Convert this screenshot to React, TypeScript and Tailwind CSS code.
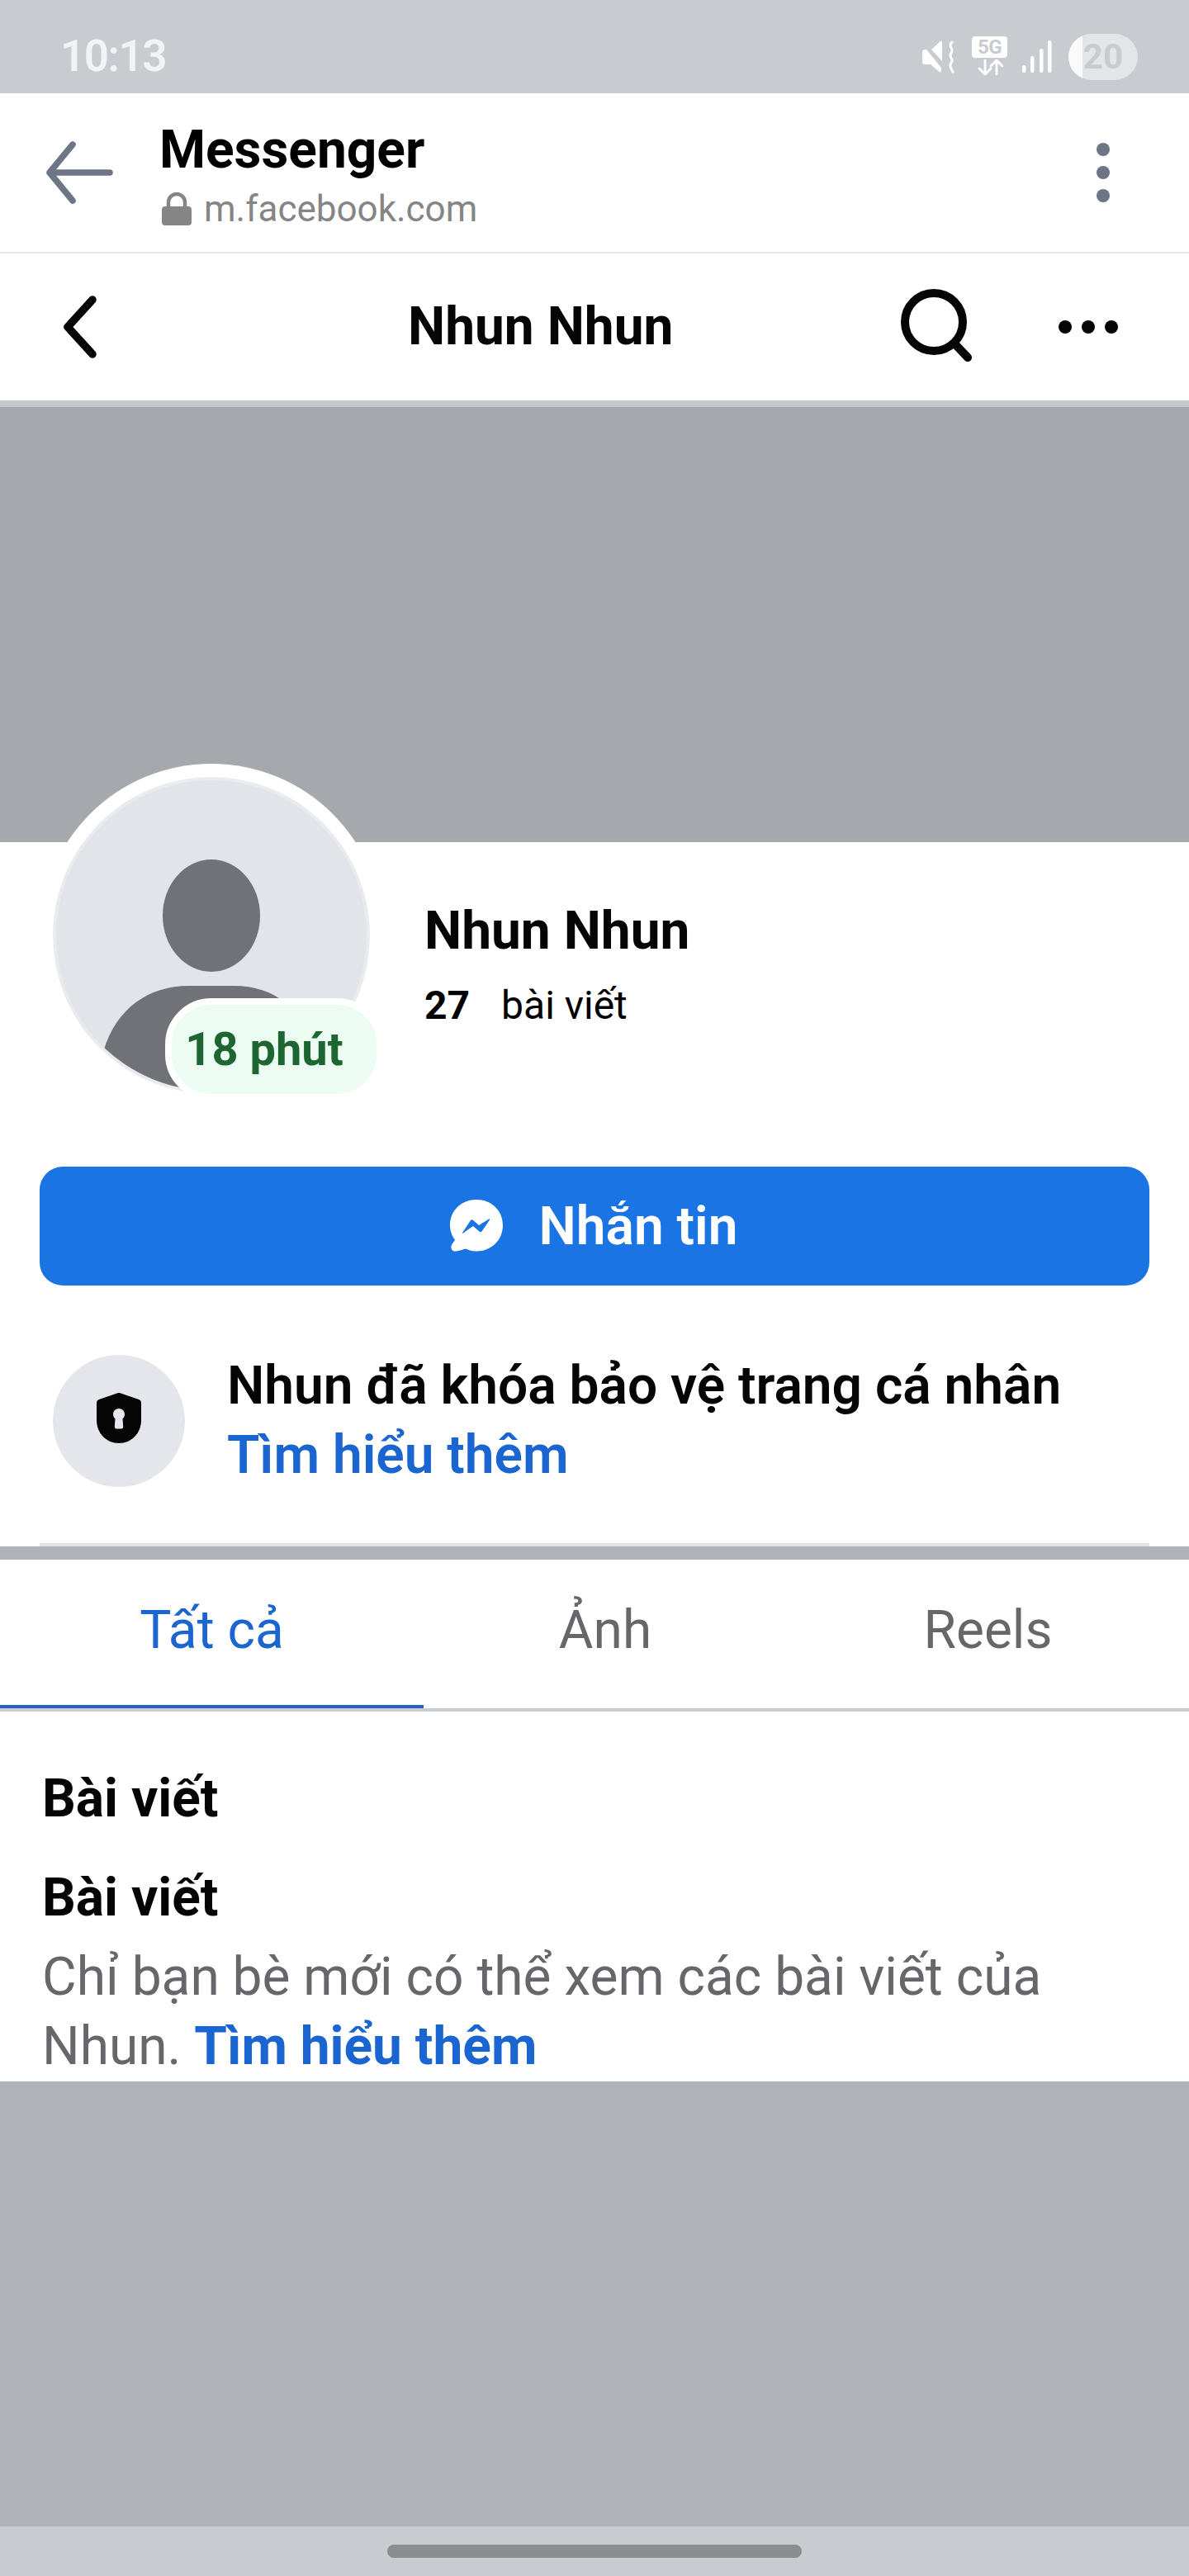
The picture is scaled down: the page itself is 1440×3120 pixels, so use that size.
import React from "react";

const font = { fontFamily: "Roboto, 'Noto Sans', sans-serif" };

function StatusIcons() {
  return (
    <div className="flex items-center">
      <svg width="40" height="40" viewBox="0 0 40 40">
        <path d="M1 14 C1 12 2 11 4 11 H6 L24 33 V37 C24 38.500 22.500 39 21.500 38 L11 29 H4 C2 29 1 28 1 26 Z" fill="#fff" />
        <path d="M13 11 L24 1 C25 .3 26 1 26 2 V25 Z" fill="#fff" transform="translate(-1 0)" />
        <path d="M3 3 L25 31" stroke="#c8cbd0" strokeWidth="2" />
        <path d="M37 2 C31 7 40 10 36 15 C32 20 40 23 36 27 C33 31 36 35 38 38" fill="none" stroke="#fff" strokeWidth="3" strokeLinecap="round" />
      </svg>
      <div className="ml-[21px] -mt-[3px] flex h-[47px] w-[43px] flex-col items-center">
        <div className="flex h-[26px] w-[43px] shrink-0 items-center justify-center rounded-[4px] bg-white text-[24px] leading-none font-bold text-[#c8cbd0]" style={{ ...font, letterSpacing: "-.5px" }}>5G</div>
        <svg width="32" height="19" viewBox="0 0 32 19" className="mt-[2px]">
          <path d="M10 1 V18 M3 11 L10 18 L17 11 M24 18 V1 M17 8 L24 1 L31 8" fill="none" stroke="#fff" strokeWidth="2.800" strokeLinecap="round" strokeLinejoin="round" />
        </svg>
      </div>
      <svg width="36" height="40" viewBox="0 0 36 40" className="ml-[18px]">
        <rect x="0" y="30" width="4.500" height="9" rx="2.200" fill="#fff" />
        <rect x="10" y="19" width="4.500" height="20" rx="2.200" fill="#fff" />
        <rect x="21" y="10" width="4.500" height="29" rx="2.200" fill="#fff" />
        <rect x="31" y="0" width="4.500" height="39" rx="2.200" fill="#fff" />
      </svg>
      <div className="relative ml-[20px] flex h-[56px] w-[84px] items-center justify-end overflow-hidden rounded-[28px] bg-[#e4e5e8] pr-[18px]">
        <div className="absolute inset-y-0 left-0 w-[17px] bg-[#fafafb]" />
        <span className="relative text-[42px] leading-none font-bold text-[#c8cbd0]" style={font}>20</span>
      </div>
    </div>
  );
}

function MessengerIcon() {
  return (
    <svg width="64" height="64" viewBox="0 0 64 64" className="shrink-0 -ml-[2px]">
      <path d="M32 0 C14 0 0 13 0 31 C0 38 2.500 44 6 49 C4 52 2 54 1.500 56 C1 60 3 63 7 62.500 C11 62 15 60.500 19 59.500 C23 61.500 27.500 62.500 32 62.500 C50 62.500 64 49 64 31 C64 13 50 0 32 0 Z" fill="#fff" />
      <path d="M15 40 L25 25 C25.500 24 26.500 24 27.500 24.500 L35 31 L47 23.500 C48 23 48.500 23.500 48 24.500 L38.500 38.500 C38 39 37 39.500 36 39 L28 32 L16 40.500 C15 41 14.500 40.500 15 40 Z" fill="#1b74e4" />
    </svg>
  );
}

function ShieldIcon() {
  return (
    <svg width="54" height="61" viewBox="0 0 54 61" className="mb-[7px]">
      <path d="M25.500 .3 C26.500 0 27.500 0 28.500 .3 L51 8 C53 8.700 54 10 54 12 V33 C54 49 42 61 27 61 C12 61 0 49 0 33 V12 C0 10 1 8.700 3 8 Z" fill="#050505" />
      <path d="M27 19 C31 19 34 22 34 26 C34 28.500 32.800 30.300 31.500 31.500 L32.200 41 C32.300 42.500 31.500 43.500 30 43.500 H24 C22.500 43.500 21.700 42.500 21.800 41 L22.500 31.500 C21.200 30.300 20 28.500 20 26 C20 22 23 19 27 19 Z" fill="#e4e6eb" />
    </svg>
  );
}

function Avatar() {
  return (
    <div className="relative h-[416px] w-[416px] shrink-0 -mt-[95px]">
      <div className="h-full w-full rounded-full bg-white p-[16px]">
        <div className="h-full w-full overflow-hidden rounded-full border-[4px] border-[#eaebee] bg-[#e1e4e9]">
          <svg width="376" height="376" viewBox="0 0 376 376">
            <ellipse cx="188" cy="164" rx="59" ry="68" fill="#707277" />
            <path d="M50 376 C52 296 96 249 161 249 H215 C280 249 317 296 317 376 Z" fill="#707277" />
          </svg>
        </div>
      </div>
      <div className="absolute left-[152px] top-[284px] flex h-[124px] w-[264px] items-center justify-center rounded-[56px] border-[8px] border-white bg-[#edfcf2] pr-[24px] pb-[1px]">
        <span className="text-[56px] leading-none font-bold text-[#1e6631]" style={font}>18 phút</span>
      </div>
    </div>
  );
}

export default function App() {
  return (
    <div className="flex h-[3120px] w-[1440px] flex-col overflow-hidden bg-white text-black" style={font}>
      {/* status bar */}
      <div className="flex h-[113px] shrink-0 items-center justify-between bg-[#c8cbd0] pl-[73px] pr-[62px] pt-[24px]">
        <span className="text-[53px] leading-none font-semibold tracking-[-1.500px] text-[#f2f3f4]">10:13</span>
        <StatusIcons />
      </div>

      {/* browser bar */}
      <div className="flex h-[194px] shrink-0 items-center border-b-[2px] border-[#e5e5e7] pl-[55px] pr-[96px]">
        <svg width="82" height="76" viewBox="0 0 82 76" className="shrink-0">
          <path d="M33 4 L5 38 L33 72 M5 38 H78" fill="none" stroke="#6e7586" strokeWidth="7.500" strokeLinecap="round" strokeLinejoin="round" />
        </svg>
        <div className="ml-[56px] flex flex-1 flex-col pt-[6px]">
          <div className="text-[64px] leading-[74px] font-bold">Messenger</div>
          <div className="mt-[8px] flex items-center pl-[3px]">
            <svg width="36" height="40" viewBox="0 0 36 40" className="shrink-0">
              <path d="M8 19 V12 a10 10 0 0 1 20 0 V19" fill="none" stroke="#858585" strokeWidth="4.500" />
              <rect x="0" y="17" width="36" height="23" rx="4" fill="#858585" />
            </svg>
            <span className="ml-[15px] text-[44px] leading-[52px] text-[#858585]">m.facebook.com</span>
          </div>
        </div>
        <div className="flex flex-col gap-[12px]">
          <div className="h-[16px] w-[16px] rounded-full bg-[#6e7586]" />
          <div className="h-[16px] w-[16px] rounded-full bg-[#6e7586]" />
          <div className="h-[16px] w-[16px] rounded-full bg-[#6e7586]" />
        </div>
      </div>

      {/* app bar */}
      <div className="flex h-[178px] shrink-0 items-center pl-[76px] pr-[86px]">
        <svg width="42" height="76" viewBox="0 0 42 76" className="shrink-0">
          <path d="M36 5 L6 38 L36 71" fill="none" stroke="#050505" strokeWidth="9.500" strokeLinecap="round" strokeLinejoin="round" />
        </svg>
        <div className="ml-[376px] flex-1 text-[64px] leading-none font-bold text-[#050505]">Nhun Nhun</div>
        <svg width="90" height="90" viewBox="0 0 90 90" className="-mt-[4px] shrink-0">
          <circle cx="41" cy="41" r="35" fill="none" stroke="#050505" strokeWidth="10" />
          <path d="M66 67 L82 84" fill="none" stroke="#050505" strokeWidth="10" strokeLinecap="round" />
        </svg>
        <div className="ml-[102px] flex gap-[12px]">
          <div className="h-[16px] w-[16px] rounded-full bg-[#050505]" />
          <div className="h-[16px] w-[16px] rounded-full bg-[#050505]" />
          <div className="h-[16px] w-[16px] rounded-full bg-[#050505]" />
        </div>
      </div>

      {/* cover */}
      <div className="h-[8px] shrink-0 bg-[#c5c8cd]" />
      <div className="h-[527px] shrink-0 bg-[#a5a8ac]" />

      {/* profile */}
      <div className="relative flex h-[853px] shrink-0 flex-col bg-white">
        <div className="flex pl-[48px]">
          <Avatar />
          <div className="ml-[50px] pt-[72px]">
            <div className="text-[64px] leading-[72px] font-bold text-[#050505]">Nhun Nhun</div>
            <div className="mt-[26px] flex items-baseline text-[48px] leading-[56px]">
              <span className="font-bold">27</span>
              <span className="ml-[38px]">bài viết</span>
            </div>
          </div>
        </div>

        <div className="mx-[48px] mt-[72px] flex h-[144px] items-center justify-center rounded-[28px] bg-[#1b74e4]">
          <MessengerIcon />
          <span className="ml-[44px] pt-[2px] text-[64px] leading-none font-semibold text-white">Nhắn tin</span>
        </div>

        <div className="mt-[80px] flex items-center pl-[64px]">
          <div className="flex h-[160px] w-[160px] shrink-0 items-center justify-center rounded-full bg-[#e4e6eb]">
            <ShieldIcon />
          </div>
          <div className="ml-[51px]">
            <div className="text-[64px] leading-[84px] font-semibold text-[#050505]">Nhun đã khóa bảo vệ trang cá nhân</div>
            <div className="text-[64px] leading-[84px] font-semibold text-[#1a65cf]">Tìm hiểu thêm</div>
          </div>
        </div>

        <div className="mx-[48px] mt-auto h-[4px] bg-[#e0e3e6]" />
      </div>

      <div className="h-[16px] shrink-0 bg-[#afb2b6]" />

      {/* tabs */}
      <div className="flex h-[184px] shrink-0 border-b-[4px] border-[#c9cbd3] text-[64px]">
        <div className="flex w-[513px] items-center justify-center border-b-[4px] border-[#2563c0] pb-[4px] text-[#1a65cf]">
          <span>Tất cả</span>
        </div>
        <div className="flex w-[440px] items-center justify-center pb-[8px] text-[#65676b]">
          <span>Ảnh</span>
        </div>
        <div className="flex flex-1 items-center justify-center pb-[8px] text-[#65676b]">
          <span>Reels</span>
        </div>
      </div>

      {/* posts */}
      <div className="flex h-[448px] shrink-0 flex-col px-[51px] pt-[64px]">
        <div className="text-[64px] leading-[84px] font-bold text-[#050505]">Bài viết</div>
        <div className="mt-[36px] text-[64px] leading-[84px] font-bold text-[#050505]">Bài viết</div>
        <div className="mt-[12px] text-[64px] leading-[84px] text-[#65676b]">
          Chỉ bạn bè mới có thể xem các bài viết của Nhun. <span className="font-bold text-[#1a65cf]">Tìm hiểu thêm</span>
        </div>
      </div>

      <div className="flex-1 bg-[#afb2b6]" />

      {/* nav bar */}
      <div className="flex h-[60px] shrink-0 items-start justify-center bg-[#c8cbd0] pt-[22px]">
        <div className="h-[16px] w-[502px] rounded-[8px] bg-[#8c8d91]" />
      </div>
    </div>
  );
}
